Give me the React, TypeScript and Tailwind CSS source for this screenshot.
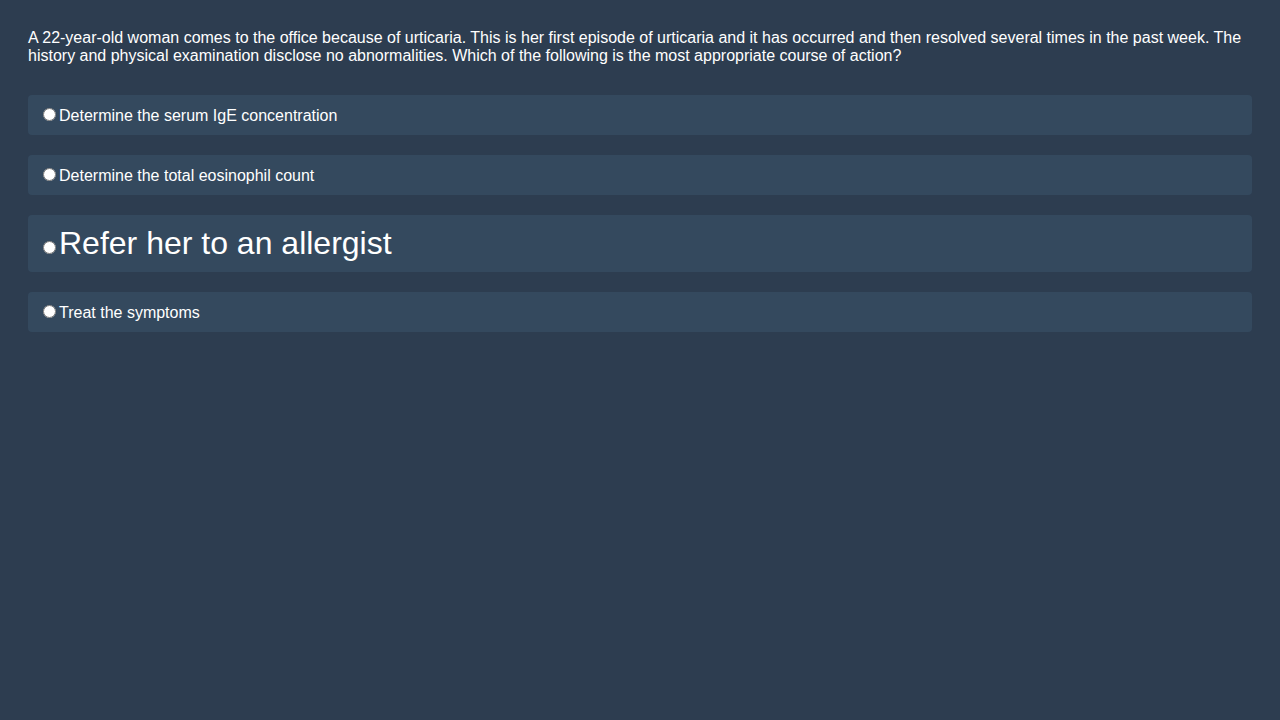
const options = [
  { id: 'a', text: 'Determine the serum IgE concentration', big: false },
  { id: 'b', text: 'Determine the total eosinophil count', big: false },
  { id: 'c', text: 'Refer her to an allergist', big: true },
  { id: 'd', text: 'Treat the symptoms', big: false },
];

export default function App() {
  return (
    <div className="min-h-screen bg-[#2d3d50] px-[28px] pt-[29px] text-white font-['Liberation_Sans',Arial,sans-serif] text-base leading-[18px]">
      <p className="mb-[30px]">
        A 22-year-old woman comes to the office because of urticaria. This is her first episode of urticaria and it has
        occurred and then resolved several times in the past week. The history and physical examination disclose no
        abnormalities. Which of the following is the most appropriate course of action?
      </p>
      <div className="flex flex-col gap-[20px]">
        {options.map((o) => (
          <label
            key={o.id}
            className={`block rounded bg-[#34495e] px-[10px] py-[10px] ${o.big ? 'h-[57px] text-[32px] leading-[37px]' : 'h-[40px] text-base leading-[20px]'}`}
          >
            <input type="radio" name="answer" className="ml-[5px] mr-[3px] mt-[3px]" />
            {o.text}
          </label>
        ))}
      </div>
    </div>
  );
}
